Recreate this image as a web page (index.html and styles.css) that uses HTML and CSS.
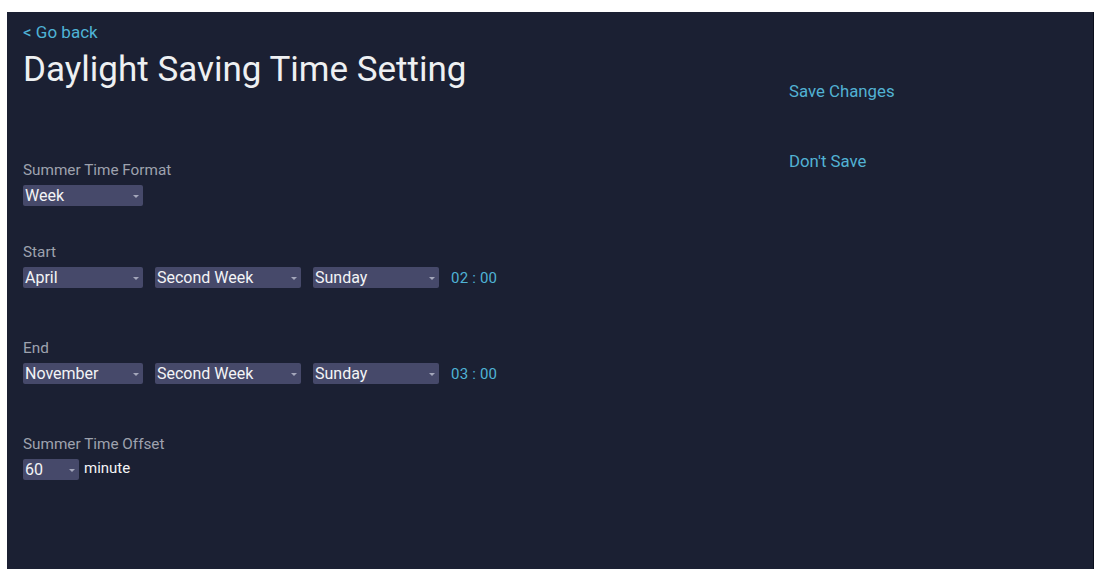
FILE: index.html
```html
<!DOCTYPE html>
<html>
<head>
<meta charset="utf-8">
<link rel="stylesheet" href="styles.css">
</head>
<body>
<div class="panel">
  <main class="main">
    <a class="back">&lt; Go back</a>
    <h1 class="title">Daylight Saving Time Setting</h1>

    <section class="group g-format">
      <div class="label">Summer Time Format</div>
      <div class="row">
        <div class="sel w120"><span>Week</span><i class="caret"></i></div>
      </div>
    </section>

    <section class="group g-start">
      <div class="label">Start</div>
      <div class="row">
        <div class="sel w120"><span>April</span><i class="caret"></i></div>
        <div class="sel w146"><span>Second Week</span><i class="caret"></i></div>
        <div class="sel w126"><span>Sunday</span><i class="caret"></i></div>
        <span class="time">02 : 00</span>
      </div>
    </section>

    <section class="group g-end">
      <div class="label">End</div>
      <div class="row">
        <div class="sel w120"><span>November</span><i class="caret"></i></div>
        <div class="sel w146"><span>Second Week</span><i class="caret"></i></div>
        <div class="sel w126"><span>Sunday</span><i class="caret"></i></div>
        <span class="time">03 : 00</span>
      </div>
    </section>

    <section class="group g-offset">
      <div class="label">Summer Time Offset</div>
      <div class="row tight">
        <div class="sel w56"><span>60</span><i class="caret"></i></div>
        <span class="unit">minute</span>
      </div>
    </section>
  </main>
  <aside class="side">
    <a class="action save">Save Changes</a>
    <a class="action nosave">Don't Save</a>
  </aside>
</div>
</body>
</html>
```

FILE: styles.css
```css
html, body {
  margin: 0;
  padding: 0;
  background: #ffffff;
  height: 100%;
  overflow: hidden;
}
body {
  font-family: Roboto, "Liberation Sans", sans-serif;
  padding: 12px 6px 0 7px;
  box-sizing: border-box;
}
.panel {
  background: #1b2033;
  height: 557px;
  display: flex;
  box-sizing: border-box;
  padding: 0 0 0 16px;
  border-right: 1px solid #0a0e1c;
}
.main {
  width: 766px;
  display: flex;
  flex-direction: column;
}
.back {
  color: #4fb3d6;
  font-size: 17px;
  line-height: 20px;
  margin-top: 10px;
}
.title {
  color: #eef0f2;
  font-weight: 400;
  font-size: 35px;
  line-height: 40px;
  margin: 8px 0 0 0;
}
.group {
  display: flex;
  flex-direction: column;
}
.g-format { margin-top: 71px; }
.g-start { margin-top: 37px; }
.g-end { margin-top: 51px; }
.g-offset { margin-top: 51px; }
.label {
  color: #9ea2ae;
  font-size: 15.3px;
  line-height: 18px;
  margin-bottom: 6px;
}
.row {
  display: flex;
  align-items: center;
  gap: 12px;
}
.row.tight { gap: 5px; }
.sel {
  height: 21px;
  background: #46496a;
  border-radius: 2px;
  display: flex;
  align-items: center;
  justify-content: space-between;
  padding: 0 4px 0 2px;
  box-sizing: border-box;
  color: #f3f4f6;
  font-size: 16px;
}
.sel .caret {
  width: 0;
  height: 0;
  border-left: 3px solid transparent;
  border-right: 3px solid transparent;
  border-top: 3px solid #a4a7bb;
  margin-top: 2px;
}
.w120 { width: 120px; }
.w146 { width: 146px; }
.w126 { width: 126px; }
.w56 { width: 56px; }
.time {
  color: #4fb3d6;
  font-size: 15px;
  letter-spacing: 0.2px;
}
.unit {
  color: #f3f4f6;
  font-size: 15px;
  margin-top: -3px;
}
.side {
  display: flex;
  flex-direction: column;
  padding-top: 69px;
}
.action {
  color: #52b2d3;
  font-size: 16.8px;
  line-height: 20px;
}
.nosave { margin-top: 50px; }
```
